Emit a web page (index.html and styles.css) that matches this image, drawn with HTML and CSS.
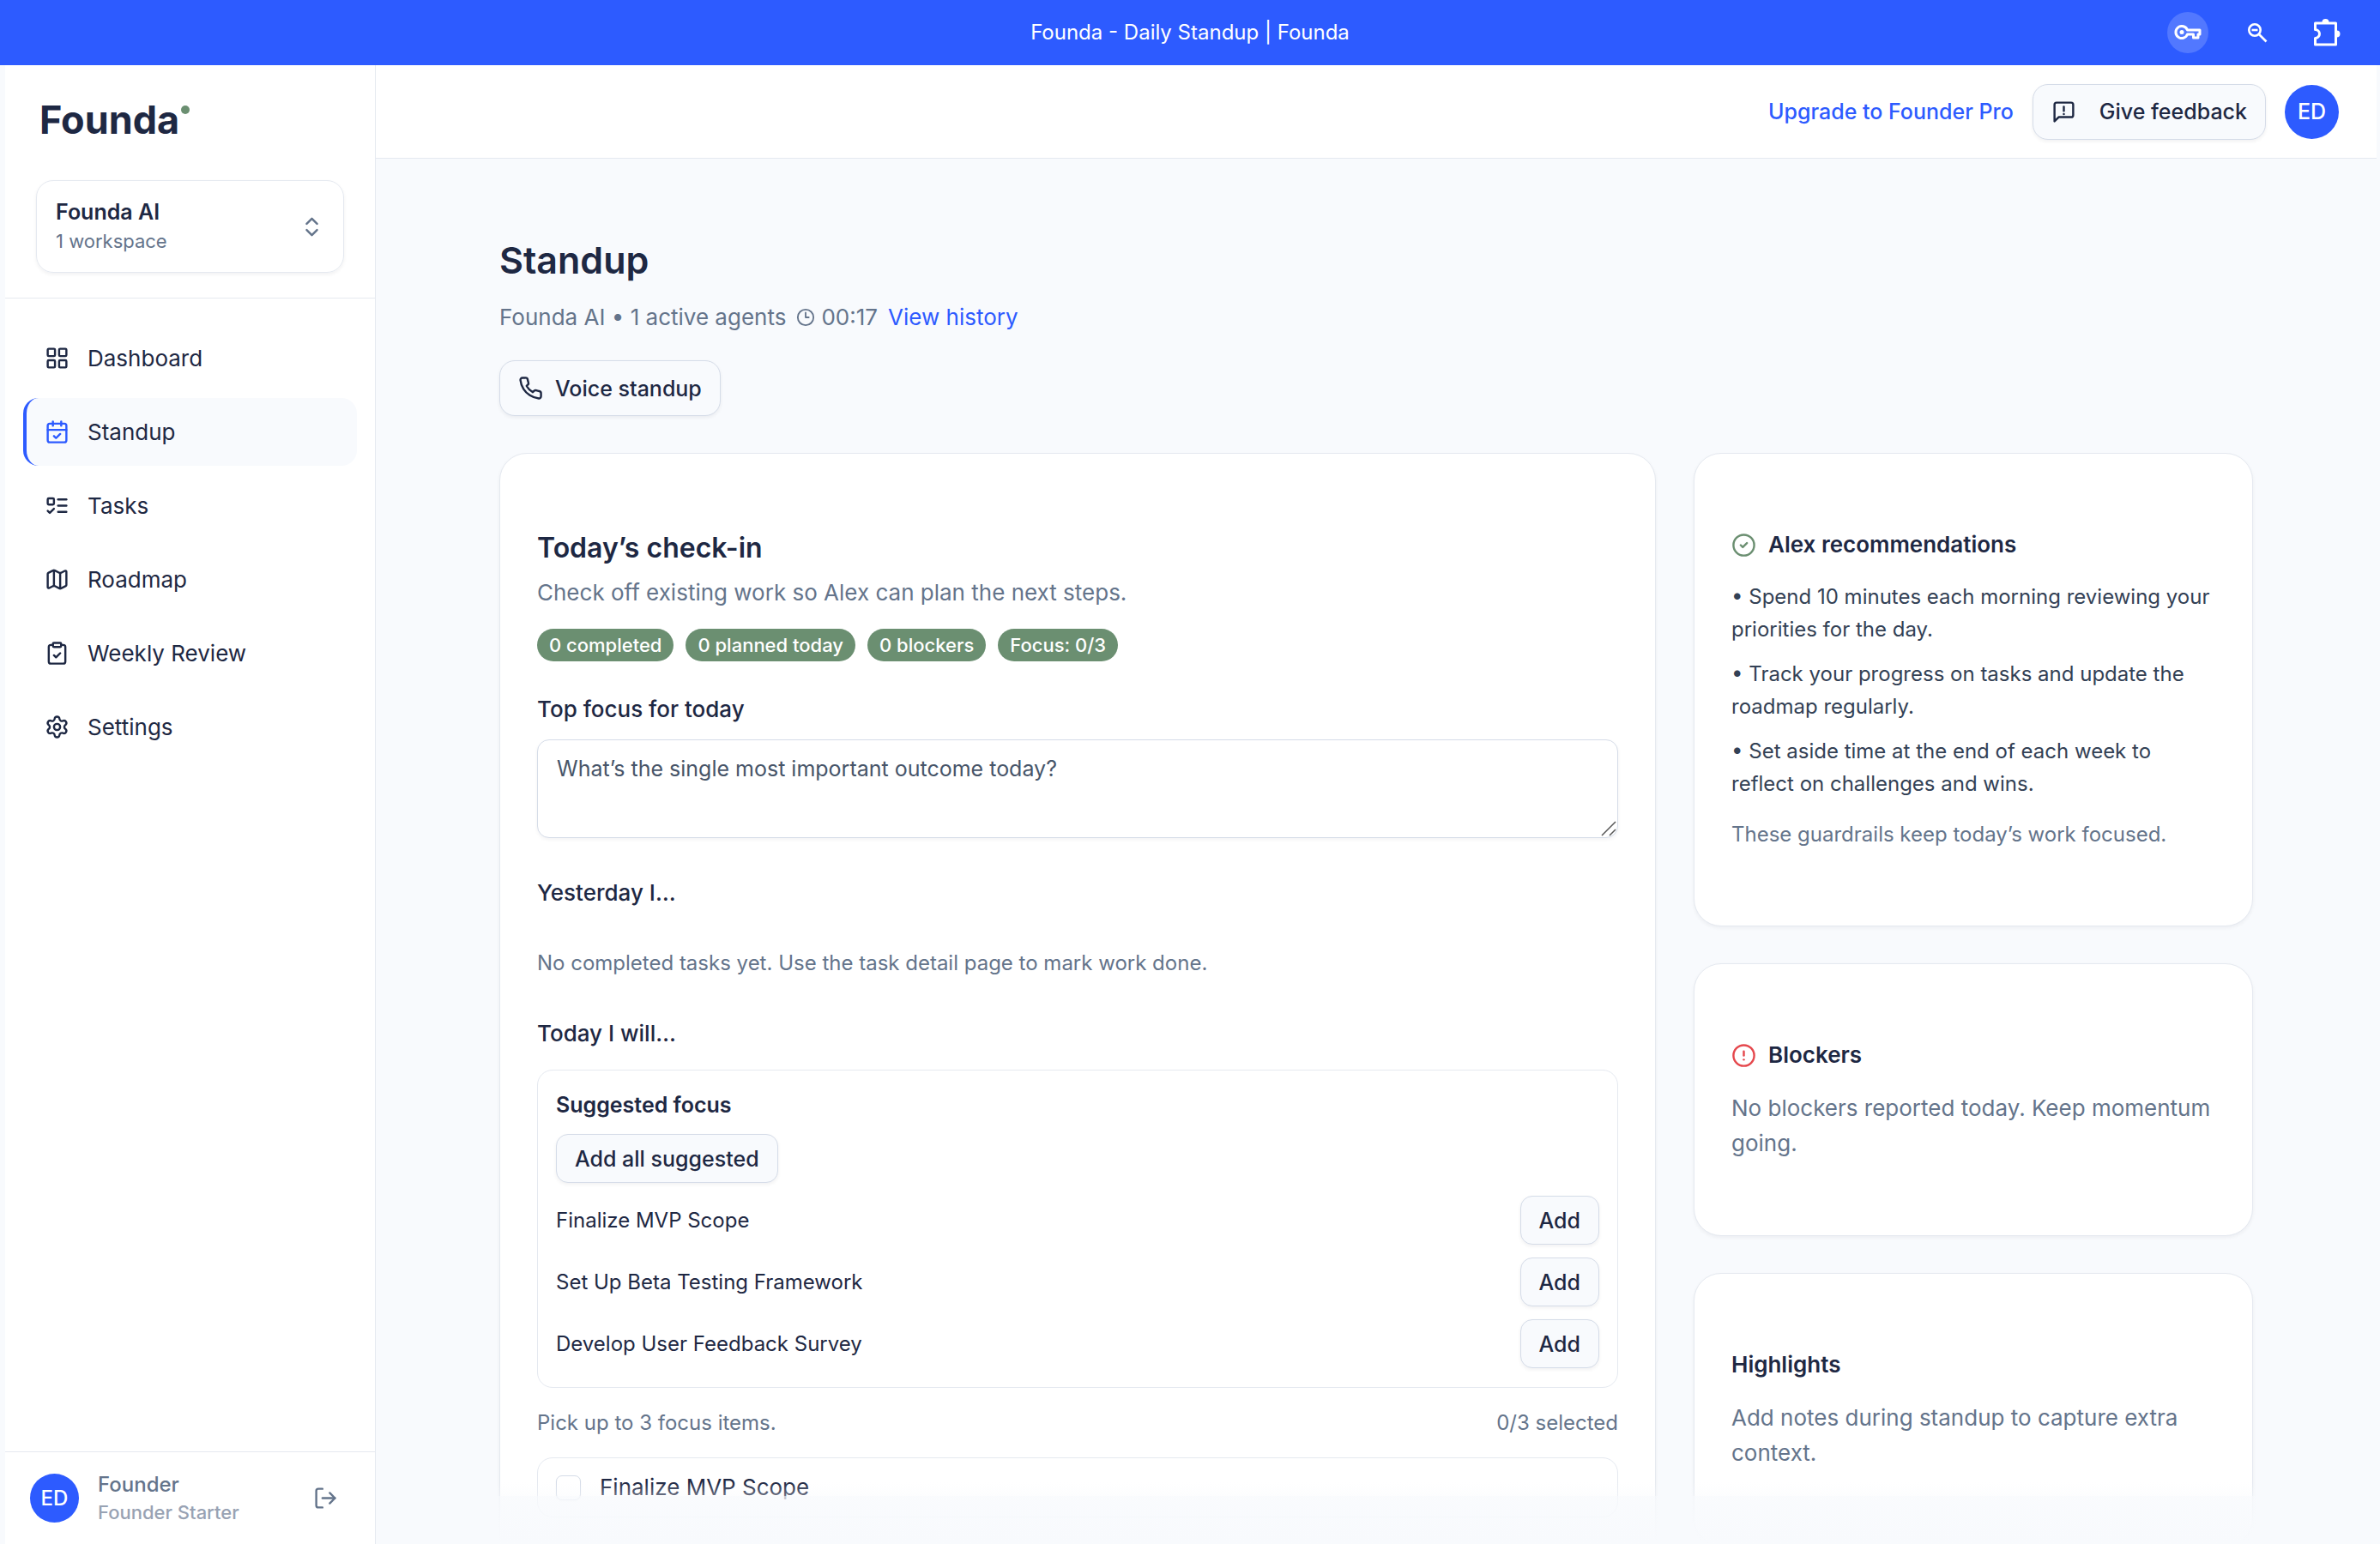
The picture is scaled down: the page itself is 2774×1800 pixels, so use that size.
FILE: index.html
```html
<!DOCTYPE html>
<html lang="en">
<head>
<meta charset="utf-8">
<meta name="viewport" content="width=device-width, initial-scale=1">
<title>Founda - Daily Standup | Founda</title>
<link rel="stylesheet" href="styles.css">
</head>
<body>
<svg class="sprite" aria-hidden="true">
  <symbol id="i-updown" viewBox="0 0 24 24"><path d="m7 15 5 5 5-5"/><path d="m7 9 5-5 5 5"/></symbol>
  <symbol id="i-grid" viewBox="0 0 24 24"><rect x="3" y="3" width="7" height="7" rx="1"/><rect x="14" y="3" width="7" height="7" rx="1"/><rect x="14" y="14" width="7" height="7" rx="1"/><rect x="3" y="14" width="7" height="7" rx="1"/></symbol>
  <symbol id="i-calendar" viewBox="0 0 24 24"><path d="M8 2v4"/><path d="M16 2v4"/><rect x="3" y="4" width="18" height="18" rx="2"/><path d="M3 10h18"/><path d="m9 16 2 2 4-4"/></symbol>
  <symbol id="i-tasks" viewBox="0 0 24 24"><rect x="3" y="5" width="6" height="6" rx="1"/><path d="m3 17 2 2 4-4"/><path d="M13 6h8"/><path d="M13 12h8"/><path d="M13 18h8"/></symbol>
  <symbol id="i-map" viewBox="0 0 24 24"><path d="M14.106 5.553a2 2 0 0 0 1.788 0l3.659-1.83A1 1 0 0 1 21 4.619v12.764a1 1 0 0 1-.553.894l-4.553 2.277a2 2 0 0 1-1.788 0l-4.212-2.106a2 2 0 0 0-1.788 0l-3.659 1.83A1 1 0 0 1 3 19.381V6.618a1 1 0 0 1 .553-.894l4.553-2.277a2 2 0 0 1 1.788 0z"/><path d="M15 5.764v15"/><path d="M9 3.236v15"/></symbol>
  <symbol id="i-clipboard" viewBox="0 0 24 24"><rect x="8" y="2" width="8" height="4" rx="1"/><path d="M16 4h2a2 2 0 0 1 2 2v14a2 2 0 0 1-2 2H6a2 2 0 0 1-2-2V6a2 2 0 0 1 2-2h2"/><path d="m9 14 2 2 4-4"/></symbol>
  <symbol id="i-gear" viewBox="0 0 24 24"><path d="M9.671 4.136a2.34 2.34 0 0 1 4.659 0 2.34 2.34 0 0 0 3.319 1.915 2.34 2.34 0 0 1 2.33 4.033 2.34 2.34 0 0 0 0 3.831 2.34 2.34 0 0 1-2.33 4.033 2.34 2.34 0 0 0-3.319 1.915 2.34 2.34 0 0 1-4.659 0 2.34 2.34 0 0 0-3.32-1.915 2.34 2.34 0 0 1-2.33-4.033 2.34 2.34 0 0 0 0-3.831A2.34 2.34 0 0 1 6.35 6.051a2.34 2.34 0 0 0 3.319-1.915"/><circle cx="12" cy="12" r="3"/></symbol>
  <symbol id="i-logout" viewBox="0 0 24 24"><path d="m16 17 5-5-5-5"/><path d="M21 12H9"/><path d="M9 21H5a2 2 0 0 1-2-2V5a2 2 0 0 1 2-2h4"/></symbol>
  <symbol id="i-feedback" viewBox="0 0 24 24"><path d="M21 15a2 2 0 0 1-2 2H7l-4 4V5a2 2 0 0 1 2-2h14a2 2 0 0 1 2 2z"/><path d="M12 7v4"/><path d="M12 14h.01"/></symbol>
  <symbol id="i-clock" viewBox="0 0 24 24"><circle cx="12" cy="12" r="10"/><path d="M12 6v6h4"/></symbol>
  <symbol id="i-phone" viewBox="0 0 24 24"><path d="M22 16.92v3a2 2 0 0 1-2.18 2 19.79 19.79 0 0 1-8.63-3.07 19.5 19.5 0 0 1-6-6 19.79 19.79 0 0 1-3.07-8.67A2 2 0 0 1 4.11 2h3a2 2 0 0 1 2 1.72 12.84 12.84 0 0 0 .7 2.81 2 2 0 0 1-.45 2.11L8.09 9.91a16 16 0 0 0 6 6l1.27-1.27a2 2 0 0 1 2.11-.45 12.84 12.84 0 0 0 2.81.7A2 2 0 0 1 22 16.92z"/></symbol>
  <symbol id="i-check" viewBox="0 0 24 24"><circle cx="12" cy="12" r="10"/><path d="m9 12 2 2 4-4"/></symbol>
  <symbol id="i-alert" viewBox="0 0 24 24"><circle cx="12" cy="12" r="10"/><path d="M12 8v4"/><path d="M12 16h.01"/></symbol>
</svg>

<div class="window">
  <header class="titlebar">
    <p class="titlebar-title">Founda - Daily Standup | Founda</p>
    <div class="titlebar-tools">
      <button class="tool tool-key" type="button" aria-label="Passwords">
        <svg width="32" height="18" viewBox="0 0 32 18" fill="none" stroke="#fff" stroke-width="3" stroke-linejoin="round"><path d="M15.500 6H30v5h-2v4h-5.500v-4H15.500A7 7 0 1 1 15.500 6z"/><circle cx="9" cy="8.500" r="2.500" fill="#fff" stroke="none"/></svg>
      </button>
      <button class="tool" type="button" aria-label="Zoom out">
        <svg width="24" height="24" viewBox="0 0 24 24" fill="none" stroke="#fff" stroke-width="2.600"><circle cx="9" cy="9" r="6.700"/><path d="m14 14 8.500 8.500"/><path d="M5.500 9h7"/></svg>
      </button>
      <button class="tool" type="button" aria-label="Extensions">
        <svg width="34" height="34" viewBox="0 0 34 34" fill="none" stroke="#fff" stroke-width="3" stroke-linejoin="round"><path d="M3.500 6H27.500V31H3.500V23.500A5 5 0 0 0 3.500 13.500z"/><path d="M11.500 5a4 4 0 0 1 8 0zM28.500 14.500a4 4 0 0 1 0 8z" fill="#fff" stroke="none"/></svg>
      </button>
    </div>
  </header>

  <div class="app">
    <aside class="sidebar">
      <div class="sidebar-head">
        <a class="logo" href="#">Founda<span class="logo-dot"></span></a>
        <button class="workspace" type="button">
          <span class="workspace-text"><span class="workspace-name">Founda AI</span><span class="workspace-count">1 workspace</span></span>
          <svg class="icon"><use href="#i-updown"/></svg>
        </button>
      </div>
      <nav class="nav">
        <a class="nav-item" href="#"><svg class="icon"><use href="#i-grid"/></svg>Dashboard</a>
        <a class="nav-item is-active" href="#" aria-current="page"><svg class="icon"><use href="#i-calendar"/></svg>Standup</a>
        <a class="nav-item" href="#"><svg class="icon"><use href="#i-tasks"/></svg>Tasks</a>
        <a class="nav-item" href="#"><svg class="icon"><use href="#i-map"/></svg>Roadmap</a>
        <a class="nav-item" href="#"><svg class="icon"><use href="#i-clipboard"/></svg>Weekly Review</a>
        <a class="nav-item" href="#"><svg class="icon"><use href="#i-gear"/></svg>Settings</a>
      </nav>
      <div class="account">
        <span class="avatar avatar-small">ED</span>
        <span class="account-text"><span class="account-name">Founder</span><span class="account-plan">Founder Starter</span></span>
        <button class="logout" type="button" aria-label="Log out"><svg class="icon"><use href="#i-logout"/></svg></button>
      </div>
    </aside>

    <div class="page">
      <header class="topbar">
        <a class="upgrade" href="#">Upgrade to Founder Pro</a>
        <button class="button button-feedback" type="button"><svg class="icon"><use href="#i-feedback"/></svg>Give feedback</button>
        <button class="avatar" type="button" aria-label="Account">ED</button>
      </header>

      <main class="main">
        <h1 class="title">Standup</h1>
        <div class="meta">
          <span>Founda AI • 1 active agents</span>
          <span class="timer"><svg class="icon icon-clock"><use href="#i-clock"/></svg>00:17</span>
          <a href="#">View history</a>
        </div>
        <button class="button button-voice" type="button"><svg class="icon"><use href="#i-phone"/></svg>Voice standup</button>

        <div class="columns">
          <section class="card checkin">
            <h2 class="checkin-title">Today’s check-in</h2>
            <p class="checkin-sub">Check off existing work so Alex can plan the next steps.</p>
            <ul class="badges">
              <li class="badge">0 completed</li>
              <li class="badge">0 planned today</li>
              <li class="badge">0 blockers</li>
              <li class="badge">Focus: 0/3</li>
            </ul>
            <label class="label" for="focus">Top focus for today</label>
            <div class="field">
              <textarea class="textarea" id="focus" placeholder="What’s the single most important outcome today?"></textarea>
              <svg class="grip" viewBox="0 0 18 18" fill="none" stroke="#555" stroke-width="1.500" aria-hidden="true"><path d="M1 17 17 1M10 17l7-7"/></svg>
            </div>
            <h3 class="label section">Yesterday I…</h3>
            <p class="note section">No completed tasks yet. Use the task detail page to mark work done.</p>
            <h3 class="label section">Today I will…</h3>
            <div class="suggested">
              <h4 class="suggested-title">Suggested focus</h4>
              <button class="button button-small" type="button">Add all suggested</button>
              <ul class="suggestions">
                <li>Finalize MVP Scope<button class="button button-small" type="button">Add</button></li>
                <li>Set Up Beta Testing Framework<button class="button button-small" type="button">Add</button></li>
                <li>Develop User Feedback Survey<button class="button button-small" type="button">Add</button></li>
              </ul>
            </div>
            <div class="note pick"><span>Pick up to 3 focus items.</span><span>0/3 selected</span></div>
            <label class="option"><input class="checkbox" type="checkbox">Finalize MVP Scope</label>
          </section>

          <div class="side">
            <section class="card">
              <h2 class="side-title"><svg class="icon icon-ok"><use href="#i-check"/></svg>Alex recommendations</h2>
              <ul class="tips">
                <li>• Spend 10 minutes each morning reviewing your priorities for the day.</li>
                <li>• Track your progress on tasks and update the roadmap regularly.</li>
                <li>• Set aside time at the end of each week to reflect on challenges and wins.</li>
              </ul>
              <p class="tips-note">These guardrails keep today’s work focused.</p>
            </section>
            <section class="card">
              <h2 class="side-title"><svg class="icon icon-bad"><use href="#i-alert"/></svg>Blockers</h2>
              <p class="side-text">No blockers reported today. Keep momentum going.</p>
            </section>
            <section class="card">
              <h2 class="side-title">Highlights</h2>
              <p class="side-text">Add notes during standup to capture extra context.</p>
            </section>
          </div>
        </div>
      </main>
      <div class="fade"></div>
    </div>
  </div>
</div>
</body>
</html>
```
FILE: styles.css
```css
:root {
  --blue: #2d5bff;
  --ink: #1e2843;
  --slate: #334155;
  --muted: #64748b;
  --green: #6b8f71;
  --surface: #f8fafd;
  --line: #e5e9f0;
  --line-strong: #d5dce8;
}

* { box-sizing: border-box; }

body {
  margin: 0;
  font-family: Inter, "Liberation Sans", sans-serif;
  font-size: 24px;
  line-height: 36px;
  color: var(--ink);
  background: var(--surface);
}

h1, h2, h3, h4, p, ul { margin: 0; padding: 0; }
ul { list-style: none; }
a { color: var(--blue); text-decoration: none; }
button { font: inherit; color: inherit; padding: 0; border: 0; background: none; cursor: pointer; }

.sprite { display: none; }

.icon {
  flex: none;
  width: 29px;
  height: 29px;
  fill: none;
  stroke: currentColor;
  stroke-width: 2;
  stroke-linecap: round;
  stroke-linejoin: round;
}

.window { display: flex; flex-direction: column; height: 100vh; }

/* Title bar */
.titlebar {
  flex: none;
  display: grid;
  grid-template-columns: 1fr auto 1fr;
  align-items: center;
  height: 76px;
  padding: 0 38px;
  color: #fff;
  background: var(--blue);
}
.titlebar-title { grid-column: 2; }
.titlebar-tools { display: flex; justify-content: flex-end; gap: 33px; }
.tool { display: grid; place-items: center; width: 48px; height: 48px; border-radius: 50%; }
.tool-key { background: #5278ff; }

.app { flex: 1; display: flex; min-height: 0; padding: 0 4px 0 6px; }

/* Sidebar */
.sidebar {
  flex: none;
  display: flex;
  flex-direction: column;
  width: 432px;
  background: #fff;
  border-right: 1px solid var(--line);
}
.sidebar-head { padding: 34px 36px 29px; border-bottom: 1px solid var(--line); }
.logo {
  display: flex;
  gap: 2px;
  padding-left: 4px;
  font-size: 45px;
  font-weight: 700;
  line-height: 60px;
  color: var(--ink);
}
.logo-dot { width: 10px; height: 10px; margin-top: 13px; border-radius: 50%; background: var(--green); }
.workspace {
  display: flex;
  align-items: center;
  justify-content: space-between;
  width: 100%;
  height: 108px;
  margin-top: 40px;
  padding: 0 22px;
  border: 1px solid var(--line);
  border-radius: 20px;
  box-shadow: 0 2px 4px rgba(15, 23, 42, .06);
  text-align: left;
  color: var(--muted);
}
.workspace-text { display: flex; flex-direction: column; }
.workspace-name { font-size: 25px; font-weight: 600; color: var(--ink); line-height: 34px; }
.workspace-count { font-size: 22px; line-height: 34px; }

.nav { flex: 1; display: flex; flex-direction: column; gap: 7px; padding: 30px 21px; }
.nav-item {
  display: flex;
  align-items: center;
  gap: 21px;
  height: 79px;
  padding-left: 21px;
  border-left: 4px solid transparent;
  border-radius: 18px;
  font-size: 26px;
  color: var(--ink);
}
.nav-item.is-active { border-left-color: var(--blue); background: var(--surface); }
.nav-item.is-active .icon { color: var(--blue); }

.account {
  display: flex;
  align-items: center;
  gap: 22px;
  height: 108px;
  padding: 0 43px 0 29px;
  border-top: 1px solid var(--line);
  color: var(--muted);
}
.account-text { flex: 1; display: flex; flex-direction: column; font-weight: 500; }
.account-name { font-size: 24px; line-height: 32px; }
.account-plan { font-size: 22px; line-height: 32px; color: #98a2b3; }
.logout { display: flex; }

.avatar {
  flex: none;
  display: grid;
  place-items: center;
  width: 63px;
  height: 63px;
  border-radius: 50%;
  font-size: 25px;
  font-weight: 500;
  color: #fff;
  background: var(--blue);
}
.avatar-small { width: 57px; height: 57px; font-size: 24px; }

/* Page */
.page { position: relative; flex: 1; display: flex; flex-direction: column; min-width: 0; }
.topbar {
  flex: none;
  display: flex;
  align-items: center;
  justify-content: flex-end;
  gap: 22px;
  height: 109px;
  padding: 0 44px;
  background: #fff;
  border-bottom: 1px solid var(--line);
}
.upgrade { font-size: 25px; font-weight: 500; }

.button {
  display: inline-flex;
  align-items: center;
  height: 65px;
  padding: 0 21px;
  border: 1px solid var(--line-strong);
  border-radius: 18px;
  font-size: 25px;
  font-weight: 500;
  background: var(--surface);
  box-shadow: 0 2px 4px rgba(15, 23, 42, .06);
}
.button-feedback { gap: 27px; }
.button-voice { gap: 14px; }
.button-small { height: 57px; border-radius: 14px; }

.main { flex: 1; min-height: 0; overflow: hidden; padding: 91px 144px 0; }
.title { font-size: 43px; font-weight: 600; line-height: 54px; }
.meta {
  display: flex;
  gap: 12px;
  margin: 18px 0 28px;
  font-size: 26px;
  line-height: 44px;
  color: var(--muted);
}
.timer { display: flex; align-items: center; gap: 7px; }
.icon-clock { width: 22px; height: 22px; }

.columns {
  display: grid;
  grid-template-columns: 337fr 163fr;
  align-items: start;
  gap: 44px;
  margin-top: 43px;
}
.card {
  padding: 88px 43px 87px;
  border: 1px solid var(--line);
  border-radius: 32px;
  background: #fff;
  box-shadow: 0 2px 4px rgba(15, 23, 42, .05);
}

/* Check-in */
.checkin-title { font-size: 32px; font-weight: 600; line-height: 44px; }
.checkin-sub { margin-top: 10px; font-size: 26px; line-height: 40px; color: var(--muted); }
.badges { display: flex; gap: 14px; margin: 22px 0 38px; }
.badge {
  padding: 0 14px;
  border-radius: 19px;
  font-size: 22px;
  font-weight: 500;
  line-height: 38px;
  color: #fff;
  background: var(--green);
}
.label { display: block; font-size: 26px; font-weight: 500; line-height: 36px; }
.field { position: relative; display: flex; margin-top: 17px; }
.textarea {
  width: 100%;
  height: 115px;
  padding: 15px 22px;
  border: 1px solid var(--line-strong);
  border-radius: 14px;
  font: inherit;
  font-size: 25px;
  color: var(--ink);
  background: #fff;
  box-shadow: 0 2px 4px rgba(15, 23, 42, .05);
  resize: none;
}
.textarea::placeholder { color: #475569; opacity: 1; }
.grip { position: absolute; right: 2px; bottom: 2px; width: 18px; height: 18px; }
.section { margin-top: 46px; }
.note { color: var(--muted); }
.suggested {
  margin-top: 24px;
  padding: 22px 21px;
  border: 1px solid var(--line);
  border-radius: 18px;
}
.suggested-title { margin-bottom: 16px; font-size: 25px; font-weight: 600; }
.suggestions li { display: flex; align-items: center; justify-content: space-between; margin-top: 15px; }
.pick { display: flex; justify-content: space-between; margin: 23px 0 22px; }
.option {
  display: flex;
  align-items: center;
  gap: 22px;
  height: 70px;
  padding: 0 21px;
  border: 1px solid var(--line);
  border-radius: 18px;
  font-size: 26px;
}
.checkbox {
  appearance: none;
  width: 29px;
  height: 29px;
  margin: 0;
  border: 1px solid var(--line-strong);
  border-radius: 7px;
  background: #fff;
  box-shadow: 0 1px 2px rgba(15, 23, 42, .05);
}

/* Side column */
.side { display: grid; gap: 43px; }
.side-title { display: flex; align-items: center; gap: 14px; font-size: 26px; font-weight: 600; line-height: 36px; }
.icon-ok { color: var(--green); }
.icon-bad { color: #e5484d; }
.tips { display: grid; gap: 14px; margin-top: 24px; line-height: 38px; color: var(--slate); }
.tips-note { margin-top: 21px; line-height: 38px; color: var(--muted); }
.side-text { margin-top: 23px; font-size: 26px; line-height: 41px; color: var(--muted); }

/* Softens the bottom edge of the scrolling content */
.fade {
  position: absolute;
  inset: auto 0 0;
  height: 72px;
  background: linear-gradient(rgba(248, 250, 253, 0), rgba(248, 250, 253, .35) 16px, rgba(248, 250, 253, .75) 16px, rgba(248, 250, 253, .9) 44px, var(--surface));
  pointer-events: none;
}
```
